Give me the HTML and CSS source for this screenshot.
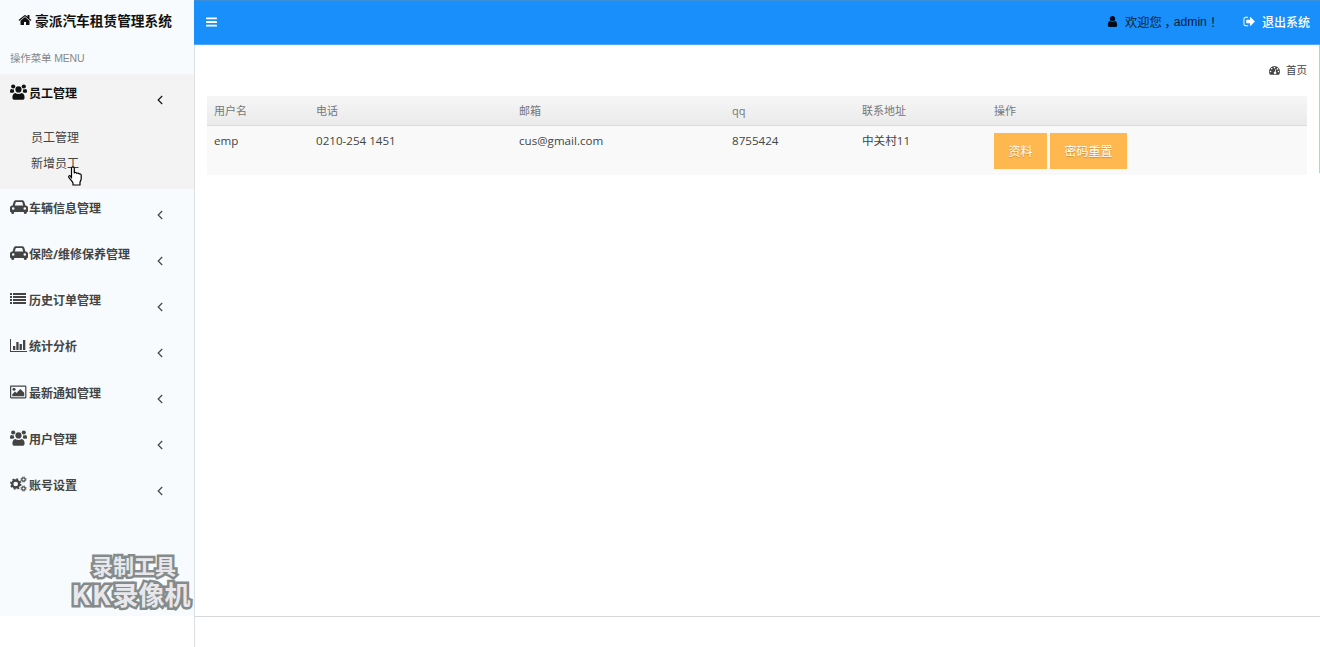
FILE: index.html
```
<!DOCTYPE html>
<html lang="zh-CN">
<head>
<meta charset="UTF-8">
<meta name="viewport" content="width=device-width, initial-scale=1.0">
<title>豪派汽车租赁管理系统</title>
<link rel="stylesheet" href="styles.css">
</head>
<body>
<!-- 图标 -->
<svg class="sprite">
	<symbol id="i-home" viewBox="0 0 1792 1792"><path d="M1472 992v480q0 26-19 45t-45 19h-384v-384h-256v384h-384q-26 0-45-19t-19-45v-480q0-1 .5-3t.5-3l575-474 575 474q1 2 1 6zm223-69l-62 74q-8 9-21 11h-3q-13 0-21-7l-692-577-692 577q-12 8-24 7-13-2-21-11l-62-74q-8-10-7-23.500t11-21.500l719-599q32-26 76-26t76 26l244 204v-195q0-14 9-23t23-9h192q14 0 23 9t9 23v408l219 182q10 8 11 21.500t-7 23.500z"/></symbol>
	<symbol id="i-bars" viewBox="0 0 12 12"><rect y="1" width="12" height="2" rx=".5"/><rect y="5" width="12" height="2" rx=".5"/><rect y="9" width="12" height="2" rx=".5"/></symbol>
	<symbol id="i-user" viewBox="0 0 1792 1792"><path d="M1536 1399q0 109-62.500 187t-150.500 78h-854q-88 0-150.500-78t-62.500-187q0-85 8.500-160.500t31.500-152 58.500-131 94-89 134.500-34.500q131 128 313 128t313-128q76 0 134.500 34.500t94 89 58.500 131 31.500 152 8.500 160.500zm-256-887q0 159-112.500 271.500t-271.500 112.500-271.500-112.500-112.500-271.500 112.500-271.500 271.500-112.500 271.500 112.500 112.500 271.500z"/></symbol>
	<symbol id="i-out" viewBox="0 0 1792 1792"><path d="M704 1440q0 4 1 20t.5 26.500-3 23.500-10 19.500-20.500 6.500h-320q-119 0-203.500-84.500t-84.500-203.500v-704q0-119 84.500-203.500t203.500-84.500h320q13 0 22.500 9.500t9.500 22.500q0 4 1 20t.5 26.500-3 23.500-10 19.500-20.500 6.500h-320q-66 0-113 47t-47 113v704q0 66 47 113t113 47h312l11.500 1 11.500 3 8 5.500 7 9 2 13.500zm928-544q0 26-19 45l-544 544q-19 19-45 19t-45-19-19-45v-288h-448q-26 0-45-19t-19-45v-384q0-26 19-45t45-19h448v-288q0-26 19-45t45-19 45 19l544 544q19 19 19 45z"/></symbol>
	<symbol id="i-dash" viewBox="0 0 14 12"><path fill-rule="evenodd" d="M7 1a7 7 0 0 0-7 7c0 1.400.4 2.600 1 3.600.2.300.4.400.7.400h10.600c.3 0 .5-.1.700-.4.600-1 1-2.200 1-3.600a7 7 0 0 0-7-7zM2 7a1 1 0 1 1 0 2 1 1 0 0 1 0-2zM3.500 3.500a1 1 0 1 1 0 2 1 1 0 0 1 0-2zM7 2a1 1 0 1 1 0 2 1 1 0 0 1 0-2zM12 7a1 1 0 1 1 0 2 1 1 0 0 1 0-2zM8.400 4.700l.9.200-.8 3.200a1.600 1.600 0 1 1-.9-.2zM10.800 3.600a1 1 0 1 1 0 2 1 1 0 0 1 0-2z"/></symbol>
	<symbol id="i-users" viewBox="0 0 17 16"><circle cx="3.200" cy="2.500" r="2.100"/><circle cx="13.800" cy="2.500" r="2.100"/><path d="M1.300 5C.3 5.300 0 6.300 0 7.700c0 .7.500 1.100 1.200 1.100h2c.3-.3.700-.6 1.100-.7A4.500 4.500 0 0 1 4 5.200C3 5.600 2.200 5.500 1.300 5zM15.700 5c1 .3 1.300 1.300 1.300 2.700 0 .7-.5 1.100-1.200 1.100h-2c-.3-.3-.7-.6-1.100-.7A4.500 4.500 0 0 0 13 5.200c1 .4 1.800.3 2.700-.2z"/><circle cx="8.500" cy="5.400" r="3.100"/><path d="M5.300 8.900c-1.900.2-2.900 2-2.900 4.500 0 1.500.9 2.400 2.200 2.400h7.800c1.300 0 2.200-.9 2.200-2.400 0-2.500-1-4.300-2.900-4.500-1.900 1.400-4.500 1.400-6.400 0z"/></symbol>
	<symbol id="i-car" viewBox="0 0 18 16"><path fill-rule="evenodd" d="M3.700 2.800C4 1.700 4.800 1.200 6 1.200h6c1.200 0 2 .5 2.300 1.600L15.400 6.500h.4C17 6.500 18 7.500 18 8.700v3.700c0 .3-.2.500-.5.500h-.7v.6a1.500 1.500 0 0 1-3 0v-.6H4.200v.6a1.500 1.500 0 0 1-3 0v-.6H.5c-.3 0-.5-.2-.5-.5V8.700C0 7.500 1 6.500 2.200 6.500h.4zM4.800 6.500h8.400l-.9-3.100c-.1-.2-.2-.3-.4-.3H6.100c-.2 0-.3.100-.4.300zM3.200 8.200a1.300 1.300 0 1 0 0 2.600 1.300 1.300 0 0 0 0-2.600zM14.800 8.200a1.300 1.300 0 1 0 0 2.600 1.300 1.300 0 0 0 0-2.600z"/></symbol>
	<symbol id="i-list" viewBox="0 0 17 16"><path d="M0 2h2v2H0zM3 2h13v2H3zM0 5h2v2H0zM3 5h13v2H3zM0 8h2v2H0zM3 8h13v2H3zM0 11h2v2H0zM3 11h13v2H3z"/></symbol>
	<symbol id="i-chart" viewBox="0 0 17 16"><path d="M0 2h1v12h16v1H0zM3 9h2.300v4H3zM6.300 5h2.300v8H6.300zM9.600 7h2.300v6H9.600zM13 3h2.300v10H13z"/></symbol>
	<symbol id="i-image" viewBox="0 0 17 15"><path fill-rule="evenodd" d="M1.200 1h14c.7 0 1.200.5 1.200 1.200v10.600c0 .7-.5 1.200-1.200 1.200h-14C.5 14 0 13.500 0 12.800V2.200C0 1.500.5 1 1.200 1zM1.200 2.200v10.600h14V2.200z"/><circle cx="4" cy="4.800" r="1.500"/><path d="M2.300 11.800V9.700L5 7l1.500 1.500L10.300 4.500l3.900 3.800v3.500z"/></symbol>
	<symbol id="i-cogs" viewBox="0 0 17 16"><g fill="none" stroke="currentColor"><circle cx="5.700" cy="8" r="3.500" stroke-width="2.300"/><circle cx="5.700" cy="8" r="5" stroke-width="1.500" stroke-dasharray="1.960 1.960"/><circle cx="13.500" cy="3.500" r="1.700" stroke-width="1.200"/><circle cx="13.500" cy="3.500" r="2.600" stroke-width=".9" stroke-dasharray="1.100 .94"/><circle cx="13.500" cy="12.500" r="1.700" stroke-width="1.200"/><circle cx="13.500" cy="12.500" r="2.600" stroke-width=".9" stroke-dasharray="1.100 .94"/></g></symbol>
	<symbol id="i-left" viewBox="0 0 6 10"><path d="M5.200 1L1.200 5l4 4" fill="none" stroke="currentColor" stroke-width="1.200"/></symbol>
</svg>

<div class="wrapper">
	<aside class="sidebar">
		<div class="menu-box">
			<div class="brand"><svg class="icon-home"><use href="#i-home"/></svg>豪派汽车租赁管理系统</div>
			<div class="menu-label">操作菜单 MENU</div>
			<ul class="menu">
				<li class="active">
					<a class="item"><svg><use href="#i-users"/></svg><span>员工管理</span><svg class="arrow"><use href="#i-left"/></svg></a>
					<ul class="submenu">
						<li>员工管理</li>
						<li>新增员工</li>
					</ul>
				</li>
				<li><a class="item"><svg class="wide"><use href="#i-car"/></svg><span>车辆信息管理</span><svg class="arrow"><use href="#i-left"/></svg></a></li>
				<li><a class="item"><svg class="wide"><use href="#i-car"/></svg><span>保险/维修保养管理</span><svg class="arrow"><use href="#i-left"/></svg></a></li>
				<li><a class="item"><svg><use href="#i-list"/></svg><span>历史订单管理</span><svg class="arrow"><use href="#i-left"/></svg></a></li>
				<li><a class="item"><svg><use href="#i-chart"/></svg><span>统计分析</span><svg class="arrow"><use href="#i-left"/></svg></a></li>
				<li><a class="item"><svg><use href="#i-image"/></svg><span>最新通知管理</span><svg class="arrow"><use href="#i-left"/></svg></a></li>
				<li><a class="item"><svg><use href="#i-users"/></svg><span>用户管理</span><svg class="arrow"><use href="#i-left"/></svg></a></li>
				<li><a class="item"><svg><use href="#i-cogs"/></svg><span>账号设置</span><svg class="arrow"><use href="#i-left"/></svg></a></li>
			</ul>
		</div>
	</aside>

	<main class="main">
		<header class="topbar">
			<svg class="toggle"><use href="#i-bars"/></svg>
			<span class="welcome"><svg><use href="#i-user"/></svg>欢迎您<span class="punct">，</span>admin<span class="punct">！</span></span>
			<a class="logout"><svg><use href="#i-out"/></svg>退出系统</a>
		</header>
		<section class="content">
			<div class="crumb"><svg><use href="#i-dash"/></svg>首页</div>
			<table class="table">
				<colgroup><col class="c-name"><col class="c-tel"><col class="c-mail"><col class="c-qq"><col class="c-addr"><col></colgroup>
				<thead>
					<tr><th>用户名</th><th>电话</th><th>邮箱</th><th>qq</th><th>联系地址</th><th>操作</th></tr>
				</thead>
				<tbody>
					<tr>
						<td>emp</td><td>0210-254 1451</td><td>cus@gmail.com</td><td>8755424</td><td>中关村11</td>
						<td><div class="btns"><button class="btn">资料</button><button class="btn">密码重置</button></div></td>
					</tr>
				</tbody>
			</table>
		</section>
	</main>
</div>

<!-- 录像水印 -->
<div class="watermark"><div class="wm-top">录制工具</div><div class="wm-bottom"><span class="wm-kk">KK</span>录像机</div></div>
<!-- 鼠标 -->
<svg class="cursor" viewBox="0 0 16 20"><path d="M4.500 12V2.200a1.400 1.400 0 0 1 2.800 0V7c.5-.8 2.300-.7 2.500.4.700-.7 2-.4 2.200.6.900-.4 2.200.1 2.200 1.300v3.500c0 1.400-.9 2.200-1.200 3.400V19H6v-2c-.8-1.500-2.500-3.300-4-5.400-1-1.400.4-2.700 1.600-1.500z" fill="#fff" stroke="#000" stroke-width="1.200" stroke-linejoin="round"/></svg>
</body>
</html>
```
FILE: styles.css
```
* {
	box-sizing: border-box;
}
body {
	margin: 0;
	background: #fff;
	color: #444;
	font-family: "Open Sans", "Noto Sans CJK SC", sans-serif;
	font-size: 12px;
	overflow: hidden;
}
ul {
	list-style: none;
	margin: 0;
	padding: 0;
}
svg {
	fill: currentColor;
	flex: none;
}
.sprite {
	display: none;
}
.wrapper {
	display: flex;
	height: 647px;
}

/* 左侧菜单 */
.sidebar {
	width: 195px;
	border-right: 1px solid #dcdfe1;
	flex: none;
}
.menu-box {
	height: 616px;
	background: #f7fbfd;
}
.brand {
	display: flex;
	align-items: center;
	height: 42px;
	padding: 0 0 2px 18px;
	color: #111;
	font-size: 13.700px;
	font-weight: 700;
	white-space: nowrap;
}
.icon-home {
	width: 14px;
	height: 14px;
	margin-right: 3px;
}
.menu-label {
	height: 32px;
	padding-left: 10px;
	line-height: 32px;
	color: #888;
	font-family: "Liberation Sans", "Noto Sans CJK SC", sans-serif;
	font-size: 10.500px;
	letter-spacing: -0.15px;
}
.item {
	display: flex;
	align-items: center;
	height: 46.150px;
	padding: 0 31px 8px 10px;
	font-weight: 700;
}
.item svg {
	width: 17px;
	height: 16px;
	margin: 0 2px 2px 0;
}
.item svg.wide {
	width: 18px;
	margin-right: 1px;
}
.item svg.arrow {
	width: 6px;
	height: 10px;
	margin: 13px 0 0 auto;
}
.active {
	height: 115px;
	background: #f3f3f3;
}
.active .item {
	color: #111;
}
.submenu {
	padding: 5px 0 0 31px;
	line-height: 26px;
}

/* 顶部 */
.main {
	flex: 1;
	height: 617px;
	border-bottom: 1px solid #d5d8dc;
	background: linear-gradient(#a5dcc4, #a5dcc4) right 45px / 1px 128px no-repeat;
}
.topbar {
	display: flex;
	align-items: center;
	height: 45px;
	margin-left: -1px;
	padding: 0 10px 2px 12px;
	border-top: 1px solid #3c8fd6;
	border-bottom: 1px solid #4fa8f5;
	background: #188ffb;
	color: #fff;
}
.toggle {
	width: 11px;
	height: 12px;
}
.welcome, .logout {
	display: flex;
	align-items: center;
}
.welcome {
	margin-left: auto;
	color: #0b1a38;
	font-family: "Liberation Sans", "Noto Sans CJK SC", sans-serif;
	font-size: 12.200px;
}
.welcome svg {
	width: 13px;
	height: 13px;
	margin-right: 6px;
	color: #020b1c;
}
/* 标点居中 */
.punct {
	padding: 0 3px;
	font-feature-settings: "halt";
}
.logout {
	margin-left: 24px;
	font-weight: 500;
}
.logout svg {
	width: 13px;
	height: 13px;
	margin-right: 6px;
}

/* 内容 */
.content {
	height: 571px;
	padding: 0 13px 0 12px;
}
.crumb {
	display: flex;
	align-items: center;
	justify-content: flex-end;
	height: 51px;
	padding-bottom: 3px;
	font-size: 10.500px;
}
.crumb svg {
	width: 11px;
	height: 10px;
	margin: 2px 6px 0 0;
}
.table {
	width: 1100px;
	border-collapse: separate;
	border-spacing: 0;
	table-layout: fixed;
}
.c-name { width: 102px; }
.c-tel { width: 203px; }
.c-mail { width: 213px; }
.c-qq { width: 130px; }
.c-addr { width: 132px; }
.table th {
	height: 30px;
	padding: 0 7px 1px;
	border-bottom: 1px solid #dcdcdc;
	color: #777;
	font-size: 11px;
	font-weight: 400;
	text-align: left;
}
.table thead tr {
	background: linear-gradient(#f6f6f6, #eaeaea);
}
.table td {
	height: 49px;
	padding: 6px 7px;
	background: #f9f9f9;
	font-size: 11.600px;
	line-height: 17px;
	vertical-align: top;
}
.btns {
	display: flex;
	gap: 3px;
	padding-top: 1px;
}
.btn {
	height: 36px;
	padding: 0 14.500px;
	border: 0;
	background: #ffb750;
	color: #fff;
	font-family: inherit;
	font-size: 12px;
	text-shadow: 0 1px 1px rgba(120, 80, 0, 0.4);
}

.watermark {
	position: absolute;
	left: 69px;
	top: 549px;
	width: 124px;
	color: #e8e8ec;
	font-family: "Noto Sans CJK SC", sans-serif;
	font-weight: 700;
	text-align: center;
	white-space: nowrap;
	-webkit-text-stroke: 5px #858b8b;
	paint-order: stroke fill;
}
.wm-top {
	padding-left: 6px;
	font-size: 21px;
	line-height: 33px;
}
.wm-bottom {
	font-size: 26px;
	line-height: 24px;
}
.wm-kk {
	font-size: 27px;
	letter-spacing: 2px;
}
.cursor {
	position: absolute;
	left: 67px;
	top: 166px;
	width: 16px;
	height: 20px;
}
```
